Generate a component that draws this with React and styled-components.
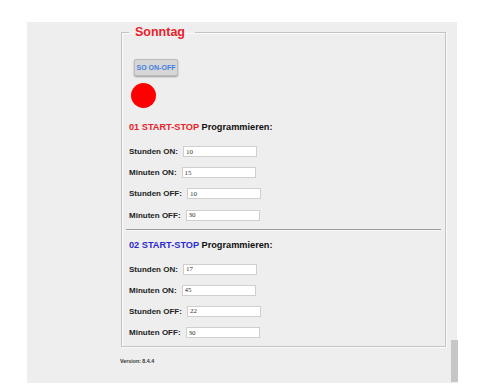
import React, { useState } from "react";
import styled, { createGlobalStyle } from "styled-components";

const GlobalStyle = createGlobalStyle`
    body {
        margin: 0;
        background: #ffffff;
        font-family: "Liberation Sans", Arial, sans-serif;
    }
`;

const Panel = styled.div`
    position: relative;
    box-sizing: border-box;
    margin: 22px 0 0 27px;
    width: 430px;
    height: 361px;
    background: #eeeeee;
    padding: 2px 0 0 94px;
    display: flex;
    flex-direction: column;
`;

const Frame = styled.fieldset`
    box-sizing: border-box;
    width: 325px;
    margin: 0;
    padding: 0 7px 8px 7px;
    border: 1px solid #c4c4c4;
    box-shadow: inset 1px 1px 0 #fafafa, 1px 1px 0 #fafafa;
    display: flex;
    flex-direction: column;
    align-items: flex-start;
`;

const Title = styled.legend`
    padding: 0 10px 0 6px;
    font-size: 12.5px;
    line-height: 16px;
    font-weight: bold;
    color: #e8212b;
`;

const ToggleButton = styled.button`
    box-sizing: border-box;
    margin: 19px 0 0 5px;
    width: 44px;
    height: 17px;
    padding: 0;
    font-family: "Liberation Sans", Arial, sans-serif;
    font-size: 7px;
    font-weight: bold;
    color: #3f7fe0;
    background: #d6d6d6;
    border: 1px solid #bcbcbc;
    border-radius: 2px;
    box-shadow: 0 1px 2px rgba(0, 0, 0, 0.35);
    cursor: pointer;
`;

const Lamp = styled.div`
    margin: 7px 0 0 2px;
    width: 25px;
    height: 25px;
    border-radius: 50%;
    background: ${p => (p.$on ? "#00c000" : "#ff0000")};
`;

const Heading = styled.div`
    margin-top: ${p => p.$top}px;
    font-size: 9.2px;
    line-height: 12px;
    font-weight: bold;
    color: #111111;
`;

const Accent = styled.span`
    color: ${p => p.$color};
`;

const Rows = styled.div`
    margin-top: 13px;
    display: flex;
    flex-direction: column;
    gap: 10.2px;
`;

const Row = styled.label`
    display: flex;
    align-items: center;
    gap: 5px;
    height: 11px;
    font-size: 8px;
    font-weight: bold;
    color: #222222;
`;

const Field = styled.input`
    box-sizing: border-box;
    width: 74px;
    height: 11px;
    padding: 0 0 0 2px;
    margin: 0;
    font-family: "Liberation Serif", "Times New Roman", serif;
    font-size: 7px;
    color: #333333;
    background: #ffffff;
    border: 1px solid #cfcfcf;
    border-radius: 0;
    outline: none;
`;

const Divider = styled.hr`
    align-self: stretch;
    margin: 8px -3px 8px -3px;
    border: 0;
    border-top: 1px solid #9a9a9a;
    border-bottom: 1px solid #f6f6f6;
`;

const Version = styled.div`
    margin: 11px 0 0 -1px;
    font-size: 5.3px;
    font-weight: bold;
    color: #333333;
`;

const ScrollThumb = styled.div`
    position: absolute;
    right: -1px;
    bottom: 1px;
    width: 7px;
    height: 42px;
    background: #c6c6c6;
`;

const Program = ({ number, color, top, values, onChange }) => {
    const fields = [
        ["Stunden ON:", "hOn"],
        ["Minuten ON:", "mOn"],
        ["Stunden OFF:", "hOff"],
        ["Minuten OFF:", "mOff"]
    ];

    return (
        <>
            <Heading $top={top}>
                <Accent $color={color}>{number} START-STOP</Accent> Programmieren:
            </Heading>
            <Rows>
                {fields.map(([label, key]) => (
                    <Row key={key}>
                        {label}
                        <Field
                            type="text"
                            value={values[key]}
                            onChange={e => onChange(key, e.target.value)}
                        />
                    </Row>
                ))}
            </Rows>
        </>
    );
};

const App = () => {
    const [on, setOn] = useState(false);
    const [first, setFirst] = useState({ hOn: "10", mOn: "15", hOff: "10", mOff: "30" });
    const [second, setSecond] = useState({ hOn: "17", mOn: "45", hOff: "22", mOff: "30" });

    return (
        <>
            <GlobalStyle />
            <Panel>
                <Frame>
                    <Title>Sonntag</Title>
                    <ToggleButton onClick={() => setOn(!on)}>SO ON-OFF</ToggleButton>
                    <Lamp $on={on} />
                    <Program
                        number="01"
                        color="#e8212b"
                        top={13}
                        values={first}
                        onChange={(k, v) => setFirst({ ...first, [k]: v })}
                    />
                    <Divider />
                    <Program
                        number="02"
                        color="#2a2ad0"
                        top={0}
                        values={second}
                        onChange={(k, v) => setSecond({ ...second, [k]: v })}
                    />
                </Frame>
                <Version>Version: 8.4.4</Version>
                <ScrollThumb />
            </Panel>
        </>
    );
};

export default App;
